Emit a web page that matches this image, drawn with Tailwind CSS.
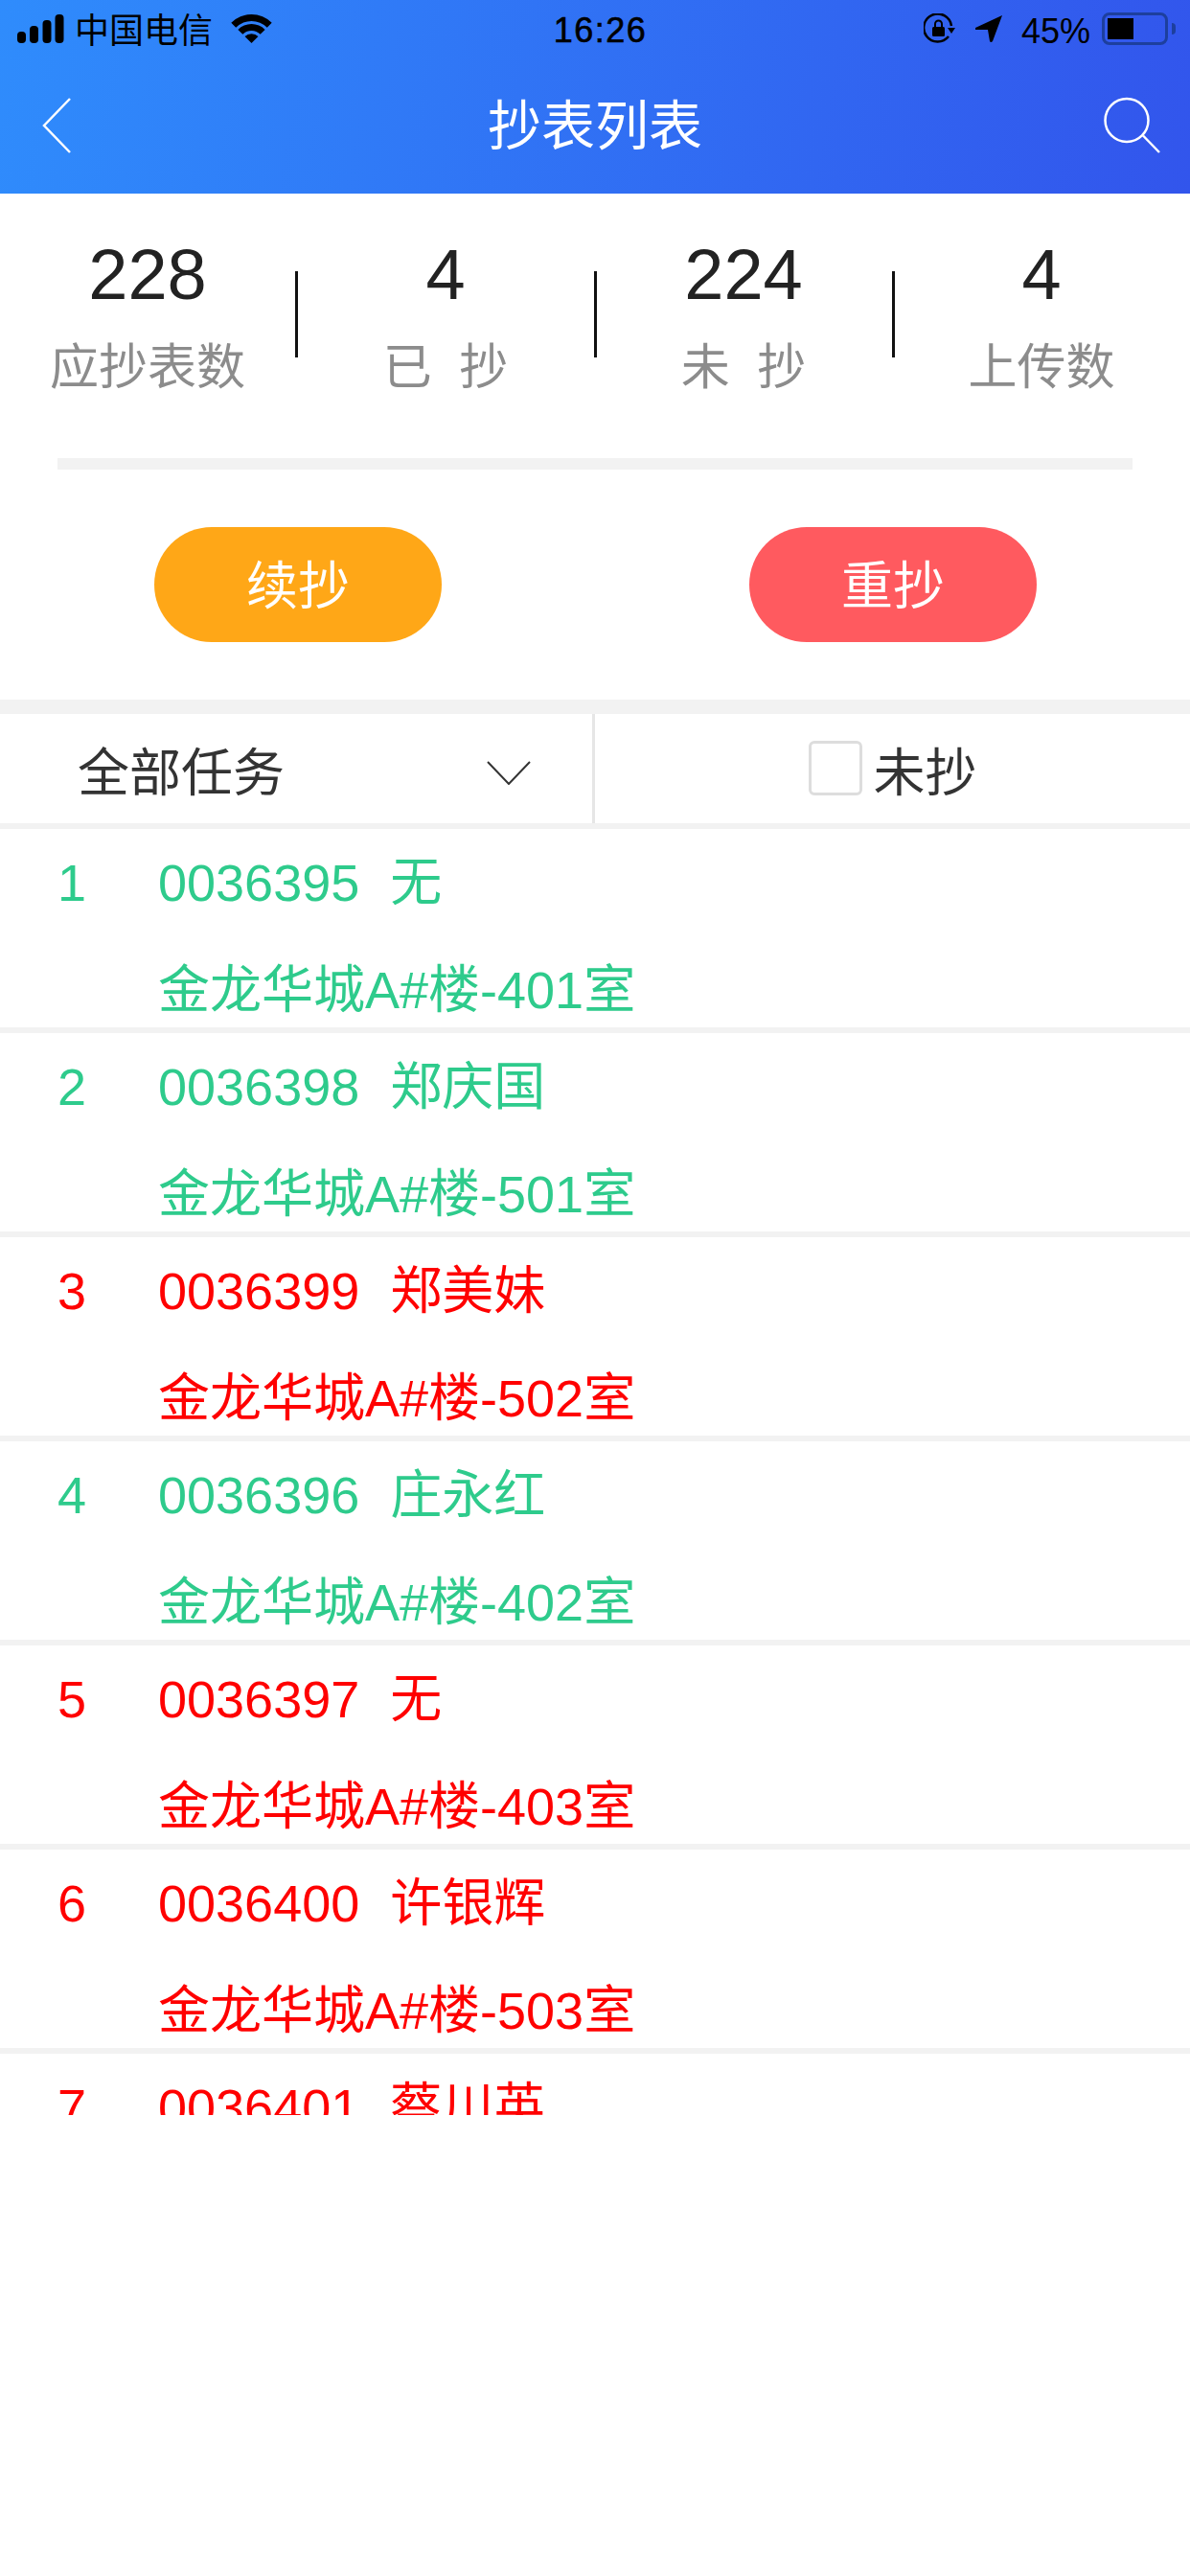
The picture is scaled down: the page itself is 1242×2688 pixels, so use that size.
<!DOCTYPE html>
<html><head><meta charset="utf-8"><script src="https://cdn.jsdelivr.net/npm/@tailwindcss/browser@4"></script></head>
<body class="bg-white">
<div class="w-[1242px] h-[2688px] bg-white overflow-hidden font-['Liberation_Sans','Noto_Sans_CJK_SC',sans-serif]">
<header class="h-[202px] bg-[linear-gradient(100deg,#2f8cfc,#3255ec)] relative">
  <div class="h-[60px] flex items-center justify-between pl-[18px] pr-[15px] text-black">
    <div class="flex items-center w-[420px]">
      <svg width="49" height="30" viewBox="0 0 49 30" fill="#000"><rect x="0" y="18" width="9" height="12" rx="4"/><rect x="13" y="12" width="9" height="18" rx="4"/><rect x="26.5" y="6" width="9" height="24" rx="4"/><rect x="39.5" y="0" width="9" height="30" rx="4"/></svg>
      <span class="ml-[11px] pt-[5px] text-[36px] leading-none">中国电信</span>
      <svg class="ml-[19px]" width="43" height="30" viewBox="0 0 43 30" fill="#000"><path d="M0.3 8.8 A30 30 0 0 1 42.7 8.8 L37.8 13.7 A23 23 0 0 0 5.2 13.7Z"/><path d="M7.4 15.9 A20 20 0 0 1 35.6 15.9 L30.7 20.8 A13 13 0 0 0 12.3 20.8Z"/><path d="M14.5 23 A10 10 0 0 1 28.5 23 L21.5 30Z"/></svg>
    </div>
    <div class="ml-[8px] pt-[4px] text-[36px] leading-none font-medium tracking-[1.5px] [-webkit-text-stroke:0.6px_#000]">16:26</div>
    <div class="flex items-center justify-end w-[420px]">
      <svg width="33" height="32" viewBox="0 0 33 32"><path d="M26 24 A14.5 14.5 0 1 1 29 13" fill="none" stroke="#000" stroke-width="2.5"/><path d="M25 15 H33 L29 21Z" fill="#000"/><rect x="9" y="14" width="13" height="10" rx="1.5" fill="#000"/><path d="M12 14 V11 a3.5 3.5 0 0 1 7 0 V14" fill="none" stroke="#000" stroke-width="2"/></svg>
      <svg class="ml-[21px]" width="28" height="28" viewBox="0 0 28 28" fill="#000"><path d="M28 0 L0 13 Q-1 15 1 15 L13 15 L15 27 Q16 29 18 27Z"/></svg>
      <span class="ml-[20px] pt-[5px] text-[36px] leading-none">45%</span>
      <div class="ml-[12px] w-[69px] h-[34px] rounded-[8px] border-[3px] border-[#1d3f9e] p-[3px]"><div class="w-[27px] h-full bg-black"></div></div>
      <div class="w-[4px] h-[12px] bg-[#1d3f9e] rounded-r-full ml-[4px]"></div>
    </div>
  </div>
  <svg class="absolute left-[44px] top-[102px]" width="30" height="58" viewBox="0 0 30 58" fill="none" stroke="#fff" stroke-width="2.5"><path d="M29 1 L2 29 L29 57"/></svg>
  <div class="absolute left-0 right-0 top-[99px] text-center text-white text-[56px] leading-[66px]">抄表列表</div>
  <svg class="absolute left-[1151px] top-[101px]" width="60" height="60" viewBox="0 0 60 60" fill="none" stroke="#fff" stroke-width="2.5"><circle cx="25" cy="24.5" r="22.5"/><path d="M42 40.5 L59 58"/></svg>
</header>
<section class="h-[276px] relative pt-[48px]">
  <div class="grid grid-cols-[repeat(4,311px)] ml-[-1.5px]">
    <div class="text-center"><div class="text-[74px] leading-[74px] text-[#222]">228</div><div class="text-[51px] leading-[60px] mt-[30px] text-[#8c8c8c]">应抄表数</div></div>
    <div class="text-center"><div class="text-[74px] leading-[74px] text-[#222]">4</div><div class="text-[51px] leading-[60px] mt-[30px] text-[#8c8c8c]">已&nbsp;&nbsp;抄</div></div>
    <div class="text-center"><div class="text-[74px] leading-[74px] text-[#222]">224</div><div class="text-[51px] leading-[60px] mt-[30px] text-[#8c8c8c]">未&nbsp;&nbsp;抄</div></div>
    <div class="text-center"><div class="text-[74px] leading-[74px] text-[#222]">4</div><div class="text-[51px] leading-[60px] mt-[30px] text-[#8c8c8c]">上传数</div></div>
  </div>
  <div class="absolute left-[308px] top-[81px] w-[3px] h-[90px] bg-[#111]"></div>
  <div class="absolute left-[620px] top-[81px] w-[3px] h-[90px] bg-[#111]"></div>
  <div class="absolute left-[931px] top-[81px] w-[3px] h-[90px] bg-[#111]"></div>
</section>
<div class="mx-[60px] h-[12px] bg-[#f2f2f2]"></div>
<section class="h-[240px] flex pt-[60px] pl-[161px] gap-[321px]">
  <div class="w-[300px] h-[120px] rounded-full bg-[#ffa717] text-white text-[54px] flex items-center justify-center pt-[5px]">续抄</div>
  <div class="w-[300px] h-[120px] rounded-full bg-[#ff5a5f] text-white text-[54px] flex items-center justify-center pt-[5px]">重抄</div>
</section>
<div class="h-[15px] bg-[#f2f2f2]"></div>
<section class="h-[120px] flex border-b-[6px] border-[#f2f2f2] text-[54px] text-[#333]">
  <div class="w-[621px] border-r-[3px] border-[#e6e6e6] flex items-center justify-between pl-[81px] pr-[64px]"><span class="mt-[10px]">全部任务</span><svg class="mt-[8px]" width="46" height="25" viewBox="0 0 46 25" fill="none" stroke="#333" stroke-width="2"><path d="M1 1 L23 24 L45 1"/></svg></div>
  <div class="flex-1 flex items-center justify-center"><span class="w-[56px] h-[57px] rounded-[6px] border-[3px] border-[#ddd] mr-[12px] mb-[2px]"></span><span class="mt-[10px]">未抄</span></div>
</section>
<section class="h-[1342px] overflow-hidden text-[54px] leading-[64px]">
  <div class="h-[213px] border-b-[6px] border-[#f2f2f2] pt-[24px] pl-[60px] text-[#2ecb8c]"><div class="flex"><span class="w-[105px]">1</span><span>0036395</span><span class="ml-[32px]">无</span></div><div class="mt-[48px] pl-[105px]">金龙华城A#楼-401室</div></div>
  <div class="h-[213px] border-b-[6px] border-[#f2f2f2] pt-[24px] pl-[60px] text-[#2ecb8c]"><div class="flex"><span class="w-[105px]">2</span><span>0036398</span><span class="ml-[32px]">郑庆国</span></div><div class="mt-[48px] pl-[105px]">金龙华城A#楼-501室</div></div>
  <div class="h-[213px] border-b-[6px] border-[#f2f2f2] pt-[24px] pl-[60px] text-[#ff0000]"><div class="flex"><span class="w-[105px]">3</span><span>0036399</span><span class="ml-[32px]">郑美妹</span></div><div class="mt-[48px] pl-[105px]">金龙华城A#楼-502室</div></div>
  <div class="h-[213px] border-b-[6px] border-[#f2f2f2] pt-[24px] pl-[60px] text-[#2ecb8c]"><div class="flex"><span class="w-[105px]">4</span><span>0036396</span><span class="ml-[32px]">庄永红</span></div><div class="mt-[48px] pl-[105px]">金龙华城A#楼-402室</div></div>
  <div class="h-[213px] border-b-[6px] border-[#f2f2f2] pt-[24px] pl-[60px] text-[#ff0000]"><div class="flex"><span class="w-[105px]">5</span><span>0036397</span><span class="ml-[32px]">无</span></div><div class="mt-[48px] pl-[105px]">金龙华城A#楼-403室</div></div>
  <div class="h-[213px] border-b-[6px] border-[#f2f2f2] pt-[24px] pl-[60px] text-[#ff0000]"><div class="flex"><span class="w-[105px]">6</span><span>0036400</span><span class="ml-[32px]">许银辉</span></div><div class="mt-[48px] pl-[105px]">金龙华城A#楼-503室</div></div>
  <div class="h-[213px] border-b-[6px] border-[#f2f2f2] pt-[24px] pl-[60px] text-[#ff0000]"><div class="flex"><span class="w-[105px]">7</span><span>0036401</span><span class="ml-[32px]">蔡川英</span></div></div>
</section>
</div>
</body></html>
